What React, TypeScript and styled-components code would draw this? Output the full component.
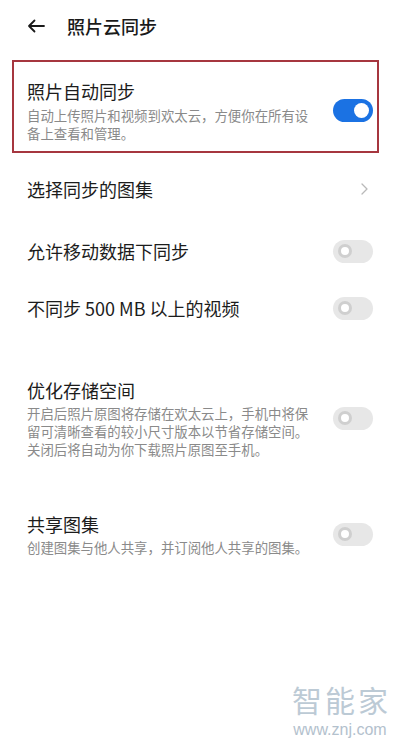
import React from 'react';
import styled, { createGlobalStyle } from 'styled-components';

const GlobalStyle = createGlobalStyle`
  html, body {
    margin: 0;
    padding: 0;
    background: #ffffff;
  }
  body {
    font-family: "Noto Sans CJK SC", "Noto Sans", sans-serif;
    color: #1c1c1c;
  }
`;

const Page = styled.div`
  position: relative;
  width: 400px;
  height: 748px;
  overflow: hidden;
  background: #fff;
`;

const Header = styled.header`
  display: flex;
  align-items: center;
  height: 52px;
  padding: 0 27px;
`;

const BackButton = styled.button`
  display: flex;
  align-items: center;
  padding: 0;
  border: none;
  background: none;
  color: #1a1a1a;
`;

const HeaderTitle = styled.h1`
  margin: 0 0 0 22px;
  font-size: 18px;
  line-height: 24px;
  font-weight: 500;
  color: #1a1a1a;
`;

const Highlight = styled.section`
  display: flex;
  align-items: center;
  margin: 8px 21px 0 12px;
  padding: 17px 4px 9px 13px;
  border: 2px solid #a6363f;
`;

const Row = styled.div<{ $top: number; $bottom: number }>`
  display: flex;
  align-items: center;
  padding: ${(p) => p.$top}px 27px ${(p) => p.$bottom}px 27px;
`;

const TextBlock = styled.div`
  flex: 1;
  min-width: 0;
`;

const Title = styled.div`
  font-size: 18px;
  line-height: 24px;
  color: #1c1c1c;
`;

const Desc = styled.div<{ $gap: number }>`
  width: 286px;
  margin-top: ${(p) => p.$gap}px;
  font-size: 13.4px;
  line-height: 18px;
  color: #8a8a8a;
`;

const Track = styled.div<{ $on?: boolean }>`
  position: relative;
  flex: none;
  width: 40px;
  height: 23px;
  border-radius: 12px;
  background: ${(p) => (p.$on ? '#1b72e3' : '#e7e7e7')};
`;

const Knob = styled.span<{ $on?: boolean }>`
  position: absolute;
  top: 50%;
  box-sizing: border-box;
  width: ${(p) => (p.$on ? 15 : 14)}px;
  height: ${(p) => (p.$on ? 15 : 14)}px;
  margin-top: ${(p) => (p.$on ? -7.5 : -7)}px;
  border-radius: 50%;
  background: #fff;
  border: ${(p) => (p.$on ? 'none' : '3.5px solid #cfcfcf')};
  ${(p) => (p.$on ? 'right: 4px;' : 'left: 5px;')}
`;

const Chevron = styled.span`
  display: flex;
  margin-right: 5px;
  color: #b9b9b9;
`;

const Watermark = styled.div`
  position: absolute;
  right: 12px;
  bottom: 9px;
  display: flex;
  flex-direction: column;
  align-items: center;
  gap: 7px;
  color: #bccad5;
`;

const MarkLogo = styled.span`
  font-size: 30px;
  line-height: 30px;
  letter-spacing: 3px;
  margin-right: -3px;
`;

const MarkUrl = styled.span`
  font-family: "Liberation Sans", Arial, sans-serif;
  font-size: 16px;
  line-height: 18px;
  color: #b3c1cd;
`;

const Toggle: React.FC<{ on?: boolean }> = ({ on }) => (
  <Track $on={on}>
    <Knob $on={on} />
  </Track>
);

const App: React.FC = () => {
  return (
    <Page>
      <GlobalStyle />
      <Header>
        <BackButton aria-label="返回">
          <svg width="18" height="14" viewBox="0 0 18 14" fill="none">
            <path d="M17 7H2M7.5 1.5L2 7l5.5 5.5" stroke="currentColor" strokeWidth="1.8" strokeLinecap="round" strokeLinejoin="round" />
          </svg>
        </BackButton>
        <HeaderTitle>照片云同步</HeaderTitle>
      </Header>

      <Highlight>
        <TextBlock>
          <Title>照片自动同步</Title>
          <Desc $gap={3}>自动上传照片和视频到欢太云，方便你在所有设备上查看和管理。</Desc>
        </TextBlock>
        <Toggle on />
      </Highlight>

      <Row $top={24} $bottom={21}>
        <TextBlock>
          <Title>选择同步的图集</Title>
        </TextBlock>
        <Chevron>
          <svg width="7" height="12" viewBox="0 0 7 12" fill="none">
            <path d="M1 1l5 5-5 5" stroke="currentColor" strokeWidth="1.3" strokeLinecap="round" strokeLinejoin="round" />
          </svg>
        </Chevron>
      </Row>

      <Row $top={17} $bottom={16}>
        <TextBlock>
          <Title>允许移动数据下同步</Title>
        </TextBlock>
        <Toggle />
      </Row>

      <Row $top={17} $bottom={16}>
        <TextBlock>
          <Title>不同步 500 MB 以上的视频</Title>
        </TextBlock>
        <Toggle />
      </Row>

      <Row $top={42} $bottom={0}>
        <TextBlock>
          <Title>优化存储空间</Title>
          <Desc $gap={2}>开启后照片原图将存储在欢太云上，手机中将保留可清晰查看的较小尺寸版本以节省存储空间。关闭后将自动为你下载照片原图至手机。</Desc>
        </TextBlock>
        <Toggle />
      </Row>

      <Row $top={54} $bottom={0}>
        <TextBlock>
          <Title>共享图集</Title>
          <Desc $gap={2}>创建图集与他人共享，并订阅他人共享的图集。</Desc>
        </TextBlock>
        <Toggle />
      </Row>

      <Watermark>
        <MarkLogo>智能家</MarkLogo>
        <MarkUrl>www.znj.com</MarkUrl>
      </Watermark>
    </Page>
  );
};

export default App;
